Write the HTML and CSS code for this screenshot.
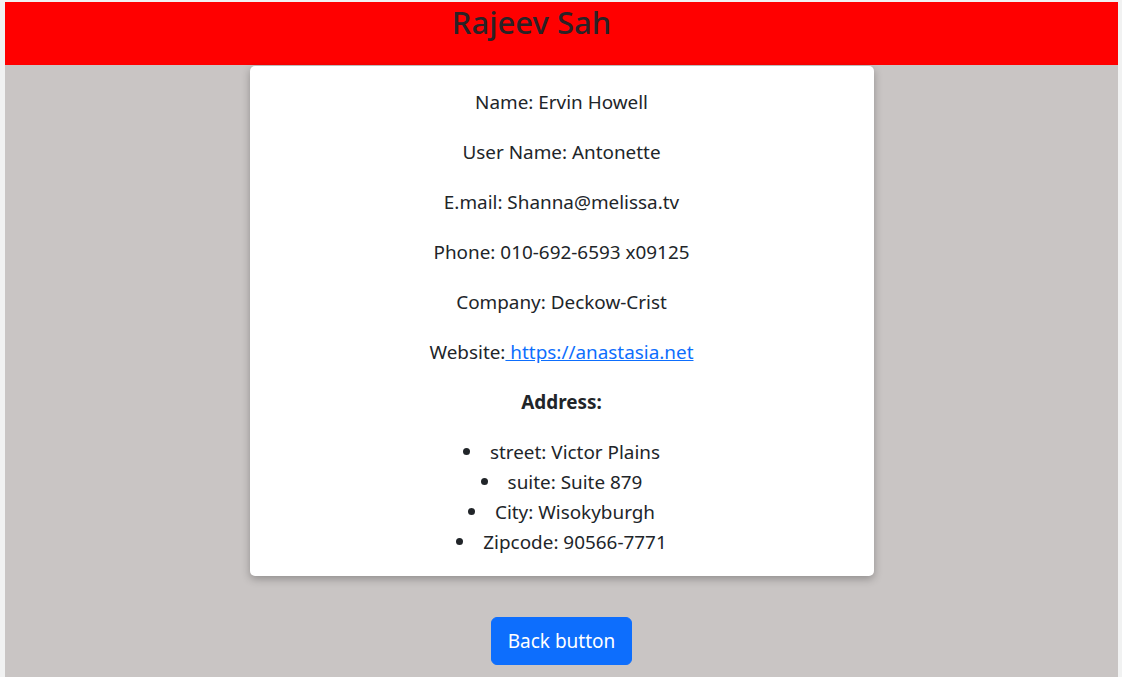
FILE: index.html
```html
<!DOCTYPE html>
<html lang="en">
<head>
<meta charset="utf-8">
<title>User details</title>
<link rel="stylesheet" href="styles.css">
</head>
<body>
<div class="app">
  <header class="topbar">
    <h2 class="title">Rajeev Sah</h2>
  </header>
  <main class="main">
    <section class="card">
      <p>Name: Ervin Howell</p>
      <p>User Name: Antonette</p>
      <p>E.mail: Shanna@melissa.tv</p>
      <p>Phone: 010-692-6593 x09125</p>
      <p>Company: Deckow-Crist</p>
      <p>Website:<a href="#" class="link"> https://anastasia.net</a></p>
      <p class="bold">Address:</p>
      <ul class="address">
        <li>street: Victor Plains</li>
        <li>suite: Suite 879</li>
        <li>City: Wisokyburgh</li>
        <li>Zipcode: 90566-7771</li>
      </ul>
    </section>
    <div class="actions">
      <button class="btn">Back button</button>
    </div>
  </main>
</div>
</body>
</html>
```
FILE: styles.css
```css
html, body {
  margin: 0;
  padding: 0;
}
body {
  background: #f1f2f2;
  font-family: "Noto Sans", "Open Sans", sans-serif;
  color: #212529;
  padding: 2px 4px 0 5px;
  height: 677px;
  box-sizing: border-box;
  overflow: hidden;
}
.app {
  display: flex;
  flex-direction: column;
  height: 100%;
}
.topbar {
  background: #ff0000;
  height: 63px;
  box-sizing: border-box;
  padding-right: 60px;
  text-align: center;
}
.title {
  margin: 2px 0 0;
  font-size: 31px;
  font-weight: 500;
  line-height: 1.2;
  color: #2a2226;
}
.main {
  flex: 1;
  background: #c9c5c4;
  padding-top: 1px;
}
.card {
  width: 624px;
  margin: 0 auto;
  background: #fff;
  border-radius: 5px;
  box-shadow: 0 3px 8px rgba(0, 0, 0, 0.28);
  box-sizing: border-box;
  padding: 21px 16px 19px;
  text-align: center;
  font-size: 18.9px;
  line-height: 30px;
}
.card p {
  margin: 0 0 20px;
}
.bold {
  font-weight: 700;
}
.link {
  color: #0d6efd;
  text-decoration: underline;
}
.address {
  margin: 0;
  padding: 0;
  list-style: none;
}
.address li::before {
  content: "";
  display: inline-block;
  width: 7px;
  height: 7px;
  border-radius: 50%;
  background: #212529;
  margin-right: 20px;
  vertical-align: 4px;
}
.actions {
  display: flex;
  justify-content: center;
  margin-top: 41px;
}
.btn {
  font-family: inherit;
  font-size: 19px;
  line-height: 30px;
  padding: 8px 16px;
  border: 1px solid #0d6efd;
  background: #0d6efd;
  color: #fff;
  border-radius: 6px;
  cursor: pointer;
}
```
